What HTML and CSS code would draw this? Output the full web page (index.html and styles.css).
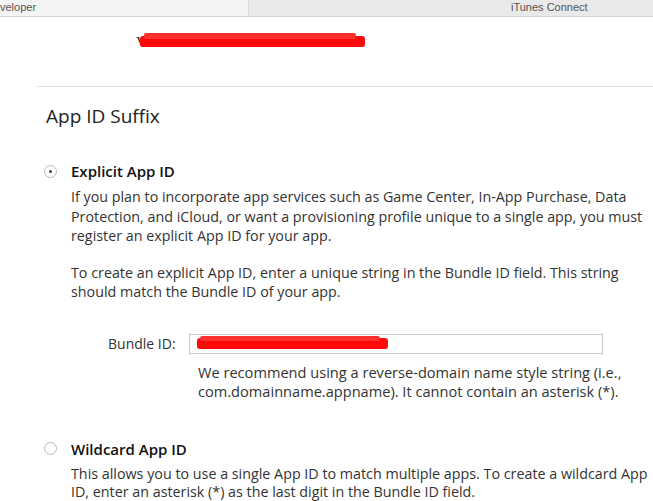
FILE: index.html
```html
<!DOCTYPE html>
<html>
<head>
<meta charset="utf-8">
<link rel="stylesheet" href="styles.css">
</head>
<body>
<div class="topbar">
  <div class="tab tab-left">veloper</div>
  <div class="tab tab-right">iTunes Connect</div>
</div>
<div class="redact-row"><span class="v">V</span><span class="scribble top-scribble"></span><span class="scribble top-scribble2"></span></div>
<div class="section">
  <h2 class="title">App ID Suffix</h2>
  <div class="option">
    <div class="opt-head"><span class="radio checked"></span><span class="opt-label">Explicit App ID</span></div>
    <div class="opt-body">
      <p class="para">If you plan to incorporate app services such as Game Center, In-App Purchase, Data<br>Protection, and iCloud, or want a provisioning profile unique to a single app, you must<br>register an explicit App ID for your app.</p>
      <p class="para">To create an explicit App ID, enter a unique string in the Bundle ID field. This string<br>should match the Bundle ID of your app.</p>
      <div class="field">
        <label class="field-label">Bundle ID:</label>
        <div class="input"><span class="c">c</span><span class="scribble in-scribble"></span><span class="scribble in-scribble2"></span></div>
      </div>
      <p class="hint">We recommend using a reverse-domain name style string (i.e.,<br>com.domainname.appname). It cannot contain an asterisk (*).</p>
    </div>
  </div>
  <div class="option option2">
    <div class="opt-head"><span class="radio"></span><span class="opt-label">Wildcard App ID</span></div>
    <div class="opt-body">
      <p class="para">This allows you to use a single App ID to match multiple apps. To create a wildcard App<br>ID, enter an asterisk (*) as the last digit in the Bundle ID field.</p>
    </div>
  </div>
</div>
</body>
</html>
```
FILE: styles.css
```css
html, body { margin: 0; padding: 0; background: #fff; }
body { font-family: "Open Sans", "Lato", sans-serif; color: #333; overflow: hidden; }
.topbar { display: flex; height: 16px; border-bottom: 1px solid #d2d2d2; font-family: "Liberation Sans", sans-serif; font-size: 11px; color: #555; }
.tab { line-height: 14px; }
.tab-left { width: 248px; background: #f4f4f4; border-right: 1px solid #d9d9d9; flex-shrink: 0; }
.tab-right { flex: 1; background: #e9e9e9; padding-left: 262px; }
.redact-row { height: 18px; margin-top: 16px; padding-left: 136px; display: flex; align-items: center; font-family: "Liberation Serif", serif; font-size: 15px; color: #333; position: relative; }
.scribble { display: inline-block; background: #ff0a0a; border-radius: 3px; filter: blur(0.7px); position: absolute; }
.top-scribble { left: 140px; top: 3px; width: 225px; height: 11px; }
.top-scribble2 { left: 144px; top: 0px; width: 212px; height: 6px; background: #ff3030; border-radius: 2px; }
.section { margin-top: 35px; margin-left: 36px; border-top: 1px solid #e3e3e3; }
.title { margin: 0; padding: 17px 0 0 10px; font-weight: normal; font-size: 19px; line-height: 24px; color: #222; }
.option { margin-top: 33px; }
.option2 { margin-top: 37px; }
.opt-head { display: flex; align-items: center; height: 20px; }
.radio { width: 11px; height: 11px; border: 1px solid #b9b9b9; border-radius: 50%; margin-left: 8px; margin-right: 14px; box-sizing: content-box; display: flex; align-items: center; justify-content: center; background: #fff; flex-shrink: 0; }
.radio.checked::after { content: ""; width: 3px; height: 3px; border-radius: 50%; background: #444; }
.opt-label { font-weight: 600; font-size: 15px; color: #111; }
.opt-body { padding-left: 35px; padding-top: 6px; }
.para { margin: 0 0 17px; font-size: 14.3px; line-height: 19.5px; color: #333; white-space: nowrap; }
.option2 .opt-body { padding-top: 6px; }
.option2 .para { margin-bottom: 0; line-height: 18.5px; }
.field { display: flex; align-items: center; margin-top: 32px; padding-left: 37px; }
.field-label { font-size: 14px; width: 81px; flex-shrink: 0; color: #333; }
.input { width: 405px; height: 18px; border: 1px solid #c8c8c8; position: relative; font-size: 13px; line-height: 18px; padding-left: 7px; box-sizing: content-box; flex-shrink: 0; }
.in-scribble { left: 7px; top: 3px; width: 191px; height: 11px; }
.in-scribble2 { left: 10px; top: 1px; width: 180px; height: 5px; background: #ff3030; border-radius: 2px; }
.c { color: #444; }
.hint { margin: 9px 0 0 127px; font-size: 14.6px; line-height: 19.5px; color: #333; white-space: nowrap; }
```
